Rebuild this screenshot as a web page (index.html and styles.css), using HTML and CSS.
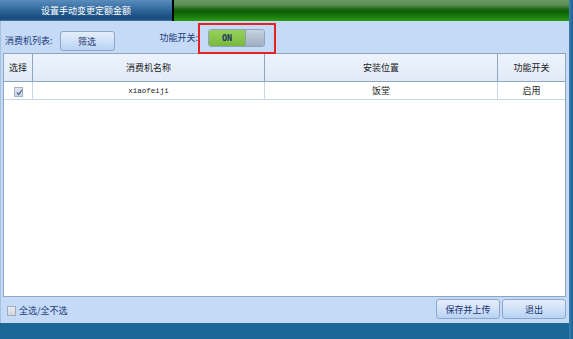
FILE: index.html
```html
<!DOCTYPE html>
<html>
<head>
<meta charset="utf-8">
<link rel="stylesheet" href="styles.css">
</head>
<body>
<div class="window">
  <div class="main">
    <div class="titlebar">
      <div class="tab">设置手动变更定额金额</div>
      <div class="sep"></div>
      <div class="green"></div>
    </div>
    <div class="content">
      <div class="toolbar">
        <span class="label list-label">消费机列表:</span>
        <button class="btn filter-btn">筛选</button>
        <span class="label switch-label">功能开关:</span>
        <div class="toggle">
          <div class="toggle-on">ON</div>
          <div class="toggle-knob"></div>
        </div>
        <div class="highlight"></div>
      </div>
      <div class="grid">
        <table>
          <thead>
            <tr>
              <th class="c1">选择</th>
              <th class="c2">消费机名称</th>
              <th class="c3">安装位置</th>
              <th class="c4">功能开关</th>
            </tr>
          </thead>
          <tbody>
            <tr>
              <td class="c1"><span class="chk"><svg width="9" height="9" viewBox="0 0 9 9"><path d="M2 4.5 L3.8 6.6 L7 1.8" fill="none" stroke="#4a64a0" stroke-width="1.2"/></svg></span></td>
              <td class="c2 mono">xiaofeiji</td>
              <td class="c3">饭堂</td>
              <td class="c4">启用</td>
            </tr>
          </tbody>
        </table>
      </div>
      <div class="footer">
        <label class="selall"><span class="box"></span><span class="selall-text">全选/全不选</span></label>
        <div class="actions">
          <button class="btn act-btn">保存并上传</button>
          <button class="btn act-btn">退出</button>
        </div>
      </div>
    </div>
    <div class="bottombar"></div>
  </div>
  <div class="stripe"></div>
</div>
</body>
</html>
```

FILE: styles.css
```css
html, body {
  margin: 0;
  padding: 0;
  width: 573px;
  height: 339px;
  overflow: hidden;
  font-family: "Noto Sans CJK SC", "DejaVu Sans", sans-serif;
  font-size: 9px;
}

.window {
  display: flex;
  width: 573px;
  height: 339px;
}

.main {
  width: 569px;
  display: flex;
  flex-direction: column;
}

.stripe {
  width: 4px;
  background: linear-gradient(to right, #3c7eb0, #1b5f90);
}

.titlebar {
  height: 21px;
  display: flex;
}

.tab {
  width: 172px;
  background: linear-gradient(#5a8cbc 0%, #3b72a6 35%, #1f5588 70%, #1a4c7c 92%, #4a7fae 100%);
  color: #ffffff;
  text-align: center;
  line-height: 21px;
  font-size: 9px;
}

.sep {
  width: 2px;
  background: #000000;
}

.green {
  flex: 1;
  background: linear-gradient(#6b9a64 0%, #5a8c50 25%, #2a6a1e 40%, #0e5e08 52%, #157208 72%, #2c9a16 100%);
}

.content {
  height: 302px;
  background: #c4daf6;
  border-left: 1px solid #a6c0e0;
  display: flex;
  flex-direction: column;
  box-sizing: border-box;
}

.toolbar {
  height: 32px;
  position: relative;
  display: flex;
  align-items: flex-start;
}

.label {
  color: #1c3a78;
  font-size: 9px;
  line-height: 12px;
}

.list-label {
  margin: 14px 0 0 4px;
}

.btn {
  font-family: "Noto Sans CJK SC", "DejaVu Sans", sans-serif;
  font-size: 9px;
  color: #1c3270;
  background: linear-gradient(#e4eefb 0%, #d0e2f8 50%, #b8d2f2 100%);
  border: 1px solid #8ea6c8;
  border-radius: 3px;
  padding: 0;
  margin: 0;
}

.filter-btn {
  width: 55px;
  height: 20px;
  margin: 10px 0 0 7px;
}

.switch-label {
  margin: 11px 0 0 45px;
}

.toggle {
  display: flex;
  width: 57px;
  height: 18px;
  margin: 8px 0 0 10px;
  border: 1px solid #8fa4bc;
  border-radius: 3px;
  box-sizing: border-box;
  overflow: hidden;
}

.toggle-on {
  width: 36px;
  background: linear-gradient(#96d05a 0%, #88c64c 50%, #76b83c 100%);
  color: #1a3262;
  font-family: "DejaVu Sans Mono", monospace;
  font-weight: bold;
  font-size: 8.5px;
  line-height: 16px;
  text-align: center;
}

.toggle-knob {
  flex: 1;
  background: linear-gradient(#c9d2de 0%, #aebccd 60%, #9dafc4 100%);
  border-left: 1px solid #8fa0b8;
}

.highlight {
  position: absolute;
  left: 197px;
  top: 2px;
  width: 78px;
  height: 31px;
  border: 2px solid #e42222;
  box-sizing: border-box;
}

.grid {
  margin-left: 2px;
  width: 563px;
  height: 244px;
  background: #ffffff;
  border: 1px solid #8ea6c4;
  box-sizing: border-box;
}

table {
  width: 561px;
  border-collapse: collapse;
  table-layout: fixed;
}

th {
  height: 27px;
  padding: 0;
  font-weight: normal;
  color: #222222;
  font-size: 9px;
  background: linear-gradient(#edf3fb, #e0eaf7);
  border-right: 1px solid #8ea6c4;
  border-bottom: 1px solid #8ea6c4;
  text-align: center;
}

td {
  height: 17px;
  padding: 0;
  color: #222222;
  font-size: 9px;
  text-align: center;
  border-right: 1px solid #c4d8ee;
  border-bottom: 1px solid #c4d8ee;
}

th.c4, td.c4 {
  border-right: none;
}

.c1 { width: 28px; }
.c2 { width: 231px; }
.c3 { width: 232px; }

.mono {
  font-family: "Liberation Mono", monospace;
  font-size: 7.5px;
}

.chk {
  display: inline-block;
  width: 9px;
  height: 10px;
  background: linear-gradient(#e4e9f0, #cdd5e0);
  border: 1px solid #a4b2c6;
  box-sizing: border-box;
  vertical-align: middle;
}

.chk svg {
  display: block;
}

.footer {
  height: 26px;
  display: flex;
  justify-content: space-between;
  align-items: flex-start;
}

.selall {
  display: flex;
  align-items: center;
  margin: 7px 0 0 6px;
}

.box {
  width: 9px;
  height: 10px;
  background: linear-gradient(#e8ebef, #d2d7de);
  border: 1px solid #a2aab6;
  box-sizing: border-box;
}

.selall-text {
  margin-left: 3px;
  color: #1c3a78;
  font-size: 9px;
}

.actions {
  display: flex;
  gap: 2px;
  margin: 2px 3px 0 0;
}

.act-btn {
  width: 64px;
  height: 20px;
}

.bottombar {
  flex: 1;
  background: #1b6797;
}
```
